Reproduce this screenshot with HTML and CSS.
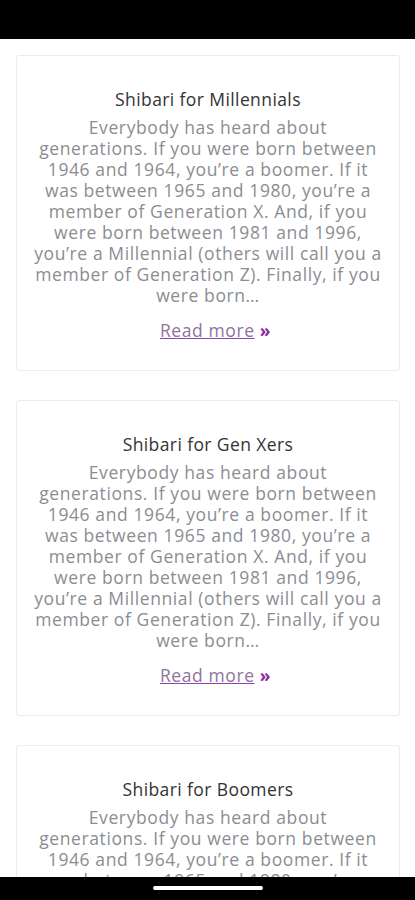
FILE: index.html
```html
<!DOCTYPE html>
<html>
<head>
<meta charset="utf-8">
<link rel="stylesheet" href="styles.css">
</head>
<body>
<div class="status-bar"></div>
<main class="list">
  <article class="card">
    <h2 class="card-title">Shibari for Millennials</h2>
    <p class="card-text">Everybody has heard about<br>generations. If you were born between<br>1946 and 1964, you’re a boomer. If it<br>was between 1965 and 1980, you’re a<br>member of Generation X. And, if you<br>were born between 1981 and 1996,<br>you’re a Millennial (others will call you a<br>member of Generation Z). Finally, if you<br>were born…</p>
    <p class="card-more"><a class="more-link" href="#">Read more</a> <span class="more-arrow">»</span></p>
  </article>
  <article class="card">
    <h2 class="card-title">Shibari for Gen Xers</h2>
    <p class="card-text">Everybody has heard about<br>generations. If you were born between<br>1946 and 1964, you’re a boomer. If it<br>was between 1965 and 1980, you’re a<br>member of Generation X. And, if you<br>were born between 1981 and 1996,<br>you’re a Millennial (others will call you a<br>member of Generation Z). Finally, if you<br>were born…</p>
    <p class="card-more"><a class="more-link" href="#">Read more</a> <span class="more-arrow">»</span></p>
  </article>
  <article class="card">
    <h2 class="card-title">Shibari for Boomers</h2>
    <p class="card-text">Everybody has heard about<br>generations. If you were born between<br>1946 and 1964, you’re a boomer. If it<br>was between 1965 and 1980, you’re a<br>member of Generation X. And, if you<br>were born between 1981 and 1996,<br>you’re a Millennial (others will call you a<br>member of Generation Z). Finally, if you<br>were born…</p>
    <p class="card-more"><a class="more-link" href="#">Read more</a> <span class="more-arrow">»</span></p>
  </article>
</main>
<div class="nav-bar"><span class="home-indicator"></span></div>
</body>
</html>
```
FILE: styles.css
```css
html, body {
  margin: 0;
  padding: 0;
  height: 900px;
  overflow: hidden;
  background: #fff;
}
body {
  font-family: "Open Sans", "Liberation Sans", sans-serif;
}
.status-bar {
  height: 39px;
  background: #000;
}
.list {
  display: flex;
  flex-direction: column;
  gap: 29px;
  padding: 16px 15px 0 16px;
}
.card {
  border: 1px solid #ececec;
  border-radius: 3px;
  padding: 33px 4px 28px;
  text-align: center;
  box-sizing: border-box;
  height: 316px;
}
.card-title {
  margin: 0;
  font-size: 17.5px;
  line-height: 21px;
  letter-spacing: 0.4px;
  font-weight: 500;
  color: #333;
}
.card-text {
  margin: 7px 0 0;
  font-size: 17.5px;
  line-height: 21px;
  letter-spacing: 0.6px;
  color: #8b8d92;
  white-space: nowrap;
}
.card-more {
  margin: 14px 0 0;
  padding-left: 15px;
  font-size: 17.5px;
  line-height: 21px;
  letter-spacing: 0.6px;
}
.more-link {
  color: #8e739e;
  text-decoration: underline;
  text-decoration-color: #8e44ad;
}
.more-arrow {
  color: #8e2aa0;
  font-weight: 700;
}
.nav-bar {
  position: fixed;
  left: 0;
  right: 0;
  bottom: 0;
  height: 23px;
  background: #000;
  display: flex;
  justify-content: center;
}
.home-indicator {
  margin-top: 9px;
  width: 110px;
  height: 4px;
  border-radius: 2px;
  background: #fff;
}
```
